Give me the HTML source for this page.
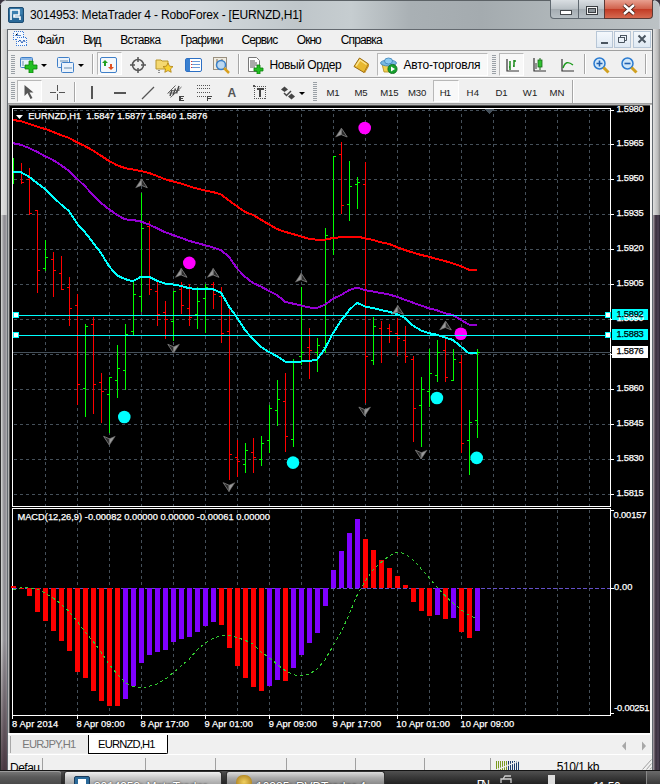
<!DOCTYPE html>
<html><head><meta charset="utf-8"><style>
html,body{margin:0;padding:0}
body{width:660px;height:784px;overflow:hidden;position:relative;background:#3a3440;font-family:"Liberation Sans",sans-serif;}
.a{position:absolute}
.t{position:absolute;white-space:nowrap;line-height:1}
.c{-webkit-text-stroke:0.25px currentColor}
</style></head><body>

<div class="a" style="left:0;top:0;width:660px;height:770px;background:#c9ced3;border-top-left-radius:7px;border-top-right-radius:7px;"></div>
<div class="a" style="left:0;top:215px;width:8px;height:555px;background:linear-gradient(to right,#303030 0px,#303030 1px,#d8d8d8 1px,#c0c0c0 2px,#8e8c92 4px,#9a989e 6px,#b8b8b8 7px);"></div>
<div class="a" style="left:0;top:29px;width:8px;height:186px;background:linear-gradient(to right,#404040 0px,#404040 1px,#e8e8e8 1px,#dadada 3px,#d0d0d0 6px,#c8c8c8 7px);"></div>
<div class="a" style="left:1px;top:640px;width:6px;height:130px;background:linear-gradient(to bottom,rgba(60,40,50,0),rgba(60,40,50,0.85));"></div>
<div class="a" style="left:652px;top:29px;width:8px;height:186px;background:linear-gradient(to right,#5a5a5a 0px,#5a5a5a 1px,#e0e0e0 1px,#cfcfcf 3px,#b8b8b8 6px,#8a8a8a 8px);"></div>
<div class="a" style="left:652px;top:215px;width:8px;height:555px;background:linear-gradient(to right,#3a3a3a 0px,#3a3a3a 1px,#a8a0a8 1px,#8a808a 2px,#4a3e4a 3px,#3a3040 5px,#54485a 6px,#3a3040 7px,#2a2430 8px);"></div>
<div class="a" style="left:0;top:5px;width:1px;height:765px;background:#2a2a2a"></div>
<div class="a" style="left:1px;top:1px;width:658px;height:28px;border-top-left-radius:6px;border-top-right-radius:6px;background:linear-gradient(to right,#dce1e5 0px,#d3d9dd 200px,#bfc6ca 300px,#c6cdd0 350px,#a9b0b4 410px,#a4abaf 480px,#b0b7ba 560px,#bcc2c5 660px);"></div>
<div class="a" style="left:6px;top:0;width:648px;height:1px;background:#5c6266"></div>
<svg class="a" style="left:8px;top:7px" width="16" height="16" viewBox="0 0 16 16">
<rect x="0.5" y="0.5" width="15" height="15" rx="1.5" fill="#2a6a9a" stroke="#1d4d73"/>
<rect x="1.5" y="1.5" width="13" height="6" fill="#4a8fc0" opacity="0.6"/>
<path d="M3 13V3h8v5H6v2h6v3" fill="none" stroke="#ffffff" stroke-width="1.6"/>
</svg>
<div class="t" style="left:30px;top:8.84px;font-size:12px;color:#000;letter-spacing:-0.196px;">3014953: MetaTrader 4 - RoboForex - [EURNZD,H1]</div>
<div class="a" style="left:550px;top:0;width:29px;height:19px;border:1px solid #5f6870;border-top:none;border-bottom-left-radius:4px;box-sizing:border-box;background:linear-gradient(#d9dee2,#b9c0c5 50%,#a4acb2 51%,#b8c0c5)"></div>
<div class="a" style="left:578px;top:0;width:27px;height:19px;border:1px solid #5f6870;border-top:none;box-sizing:border-box;background:linear-gradient(#d9dee2,#b9c0c5 50%,#a4acb2 51%,#b8c0c5)"></div>
<div class="a" style="left:604px;top:0;width:49px;height:19px;border:1px solid #5a3a36;border-top:none;border-bottom-right-radius:4px;box-sizing:border-box;background:linear-gradient(#e8a090,#d0604a 50%,#c23a24 51%,#d66a50)"></div>
<div class="a" style="left:560px;top:10px;width:10px;height:3px;background:#fff;border:1px solid #44484c"></div>
<div class="a" style="left:586px;top:6px;width:12px;height:9px;border:1px solid #3a3e42;background:#f4f4f4;box-sizing:border-box"></div>
<div class="a" style="left:588px;top:8px;width:8px;height:5px;border:1px solid #3a3e42;background:#8a9298;box-sizing:border-box"></div>

<svg class="a" style="left:621px;top:3px" width="16" height="13" viewBox="0 0 16 13"><path d="M3 2L13 11M13 2L3 11" stroke="#3a1a14" stroke-width="4.2"/><path d="M3 2L13 11M13 2L3 11" stroke="#ffffff" stroke-width="2.4"/></svg>
<div class="a" style="left:7px;top:29px;width:646px;height:741px;background:#f0f0f0;border:1px solid #646a70;box-sizing:border-box"></div>
<div class="a" style="left:8px;top:30px;width:644px;height:20px;background:#f0f0f0"></div>
<div class="a" style="left:8px;top:50px;width:644px;height:1px;background:#a0a0a0"></div>
<svg class="a" style="left:13px;top:31px" width="15" height="16" viewBox="0 0 15 16" shape-rendering="crispEdges">
<rect x="0.5" y="0.5" width="10" height="8" fill="#f4f8fc" stroke="#3a7ad8" stroke-dasharray="1 1"/>
<rect x="3.5" y="6.5" width="10" height="8" fill="#f4f8fc" stroke="#3a7ad8" stroke-dasharray="1 1"/>
<path d="M2 4h2v-2M5 4h3" stroke="#5a8ad0"/>
<path d="M5 11l2-2 2 3 2-3 1 2" fill="none" stroke="#2a60b8" shape-rendering="auto"/>
</svg>
<div class="t" style="left:37px;top:34.04px;font-size:12px;color:#000;letter-spacing:-0.667px;">Файл</div>
<div class="t" style="left:83.3px;top:34.04px;font-size:12px;color:#000;letter-spacing:-1.755px;">Вид</div>
<div class="t" style="left:120.2px;top:34.04px;font-size:12px;color:#000;letter-spacing:-0.600px;">Вставка</div>
<div class="t" style="left:180.5px;top:34.04px;font-size:12px;color:#000;letter-spacing:-0.783px;">Графики</div>
<div class="t" style="left:241.4px;top:34.04px;font-size:12px;color:#000;letter-spacing:-0.859px;">Сервис</div>
<div class="t" style="left:296.8px;top:34.04px;font-size:12px;color:#000;letter-spacing:-0.962px;">Окно</div>
<div class="t" style="left:340.7px;top:34.04px;font-size:12px;color:#000;letter-spacing:-0.846px;">Справка</div>
<div class="a" style="left:596px;top:31px;width:17px;height:17px;box-sizing:border-box;border:1px solid #b7c6d6;background:linear-gradient(#f4f8fc,#dfe9f3)"></div>
<div class="a" style="left:614px;top:31px;width:17px;height:17px;box-sizing:border-box;border:1px solid #b7c6d6;background:linear-gradient(#f4f8fc,#dfe9f3)"></div>
<div class="a" style="left:633px;top:31px;width:18px;height:17px;box-sizing:border-box;border:1px solid #b7c6d6;background:linear-gradient(#f4f8fc,#dfe9f3)"></div>
<div class="a" style="left:601px;top:42px;width:7px;height:2px;background:#4a5560"></div>
<svg class="a" style="left:617px;top:34px" width="11" height="10"><path d="M3.5 1.5h6v5h-2M1.5 3.5h6v5h-6z M3.5 1.5v2" fill="none" stroke="#4a5560" stroke-width="1"/><path d="M3 1h7v1h-7zM1 3h7v1h-7z" fill="#4a5560"/></svg>
<svg class="a" style="left:637px;top:34px" width="10" height="10"><path d="M1.5 1.5l7 7M8.5 1.5l-7 7" stroke="#4a5560" stroke-width="2"/></svg>
<div class="a" style="left:8px;top:51px;width:644px;height:27px;background:#f0f0f0"></div>
<div class="a" style="left:8px;top:77px;width:644px;height:1px;background:#a0a0a0"></div>
<div class="a" style="left:8px;top:78px;width:644px;height:1px;background:#ffffff"></div>
<div class="a" style="left:8px;top:79px;width:644px;height:25px;background:#f0f0f0"></div>
<div class="a" style="left:8px;top:103px;width:644px;height:1px;background:#a0a0a0"></div>
<div class="a" style="left:11px;top:55px;width:4px;height:1px;background:#9aa0a6"></div><div class="a" style="left:11px;top:57px;width:4px;height:1px;background:#9aa0a6"></div><div class="a" style="left:11px;top:59px;width:4px;height:1px;background:#9aa0a6"></div><div class="a" style="left:11px;top:61px;width:4px;height:1px;background:#9aa0a6"></div><div class="a" style="left:11px;top:63px;width:4px;height:1px;background:#9aa0a6"></div><div class="a" style="left:11px;top:65px;width:4px;height:1px;background:#9aa0a6"></div><div class="a" style="left:11px;top:67px;width:4px;height:1px;background:#9aa0a6"></div><div class="a" style="left:11px;top:69px;width:4px;height:1px;background:#9aa0a6"></div><div class="a" style="left:11px;top:71px;width:4px;height:1px;background:#9aa0a6"></div><div class="a" style="left:11px;top:73px;width:4px;height:1px;background:#9aa0a6"></div>
<svg class="a" style="left:19px;top:56px" width="19" height="17" viewBox="0 0 19 17">
<rect x="1.5" y="1.5" width="12" height="10" rx="1" fill="#eaf2fb" stroke="#3f7fc8"/>
<rect x="2" y="2" width="11" height="2" fill="#8cb8e8"/>
<path d="M4 5v5" stroke="#6a8fb0"/>
<path d="M10 5h4v4h4v4h-4v4h-4v-4h-4v-4h4z" fill="#22c022" stroke="#0a800a" stroke-width="0.8"/>
</svg>
<div class="a" style="left:41px;top:64px;width:0;height:0;border-left:3px solid transparent;border-right:3px solid transparent;border-top:3px solid #000"></div>
<svg class="a" style="left:56px;top:56px" width="19" height="18" viewBox="0 0 19 18">
<rect x="1.5" y="1.5" width="12" height="10" rx="1" fill="#eaf2fb" stroke="#3f7fc8"/>
<rect x="5.5" y="6.5" width="12" height="10" rx="1" fill="#eaf2fb" stroke="#3f7fc8"/>
<path d="M4 5h8M8 12h8" stroke="#6a8fb0"/>
</svg>
<div class="a" style="left:78px;top:64px;width:0;height:0;border-left:3px solid transparent;border-right:3px solid transparent;border-top:3px solid #000"></div>
<div class="a" style="left:92px;top:54px;width:1px;height:20px;background:#a6a6a6"></div><div class="a" style="left:93px;top:54px;width:1px;height:20px;background:#fff"></div>
<div class="a" style="left:97px;top:52px;width:25px;height:23px;box-sizing:border-box;border:1px solid #b8b8b8;border-right-color:#fff;border-bottom-color:#fff;background:#f8f8f8"></div>
<svg class="a" style="left:100px;top:57px" width="17" height="16" viewBox="0 0 17 16">
<rect x="0.5" y="0.5" width="16" height="15" rx="1.5" fill="#f4f8fc" stroke="#3f7fc8"/>
<path d="M5 3l3 3h-2v3h-2v-3h-2z" fill="#20a020"/>
<path d="M11 13l3-3h-2v-3h-2v3h-2z" fill="#e05020"/>
</svg>
<svg class="a" style="left:130px;top:57px" width="16" height="16" viewBox="0 0 16 16">
<circle cx="8" cy="8" r="5.5" fill="none" stroke="#555" stroke-width="1.5"/>
<path d="M8 0v5M8 11v5M0 8h5M11 8h5" stroke="#555" stroke-width="1.5"/>
</svg>
<svg class="a" style="left:155px;top:57px" width="19" height="17" viewBox="0 0 19 17">
<path d="M1 3h5l1 1h6v8h-12z" fill="#f4d870" stroke="#b8962a"/>
<path d="M13 6l1.6 3.2 3.4.4-2.5 2.3.7 3.4-3.2-1.7-3.2 1.7.7-3.4-2.5-2.3 3.4-.4z" fill="#f6d030" stroke="#b08010" stroke-width="0.8"/>
<path d="M4 13v3" stroke="#333" stroke-dasharray="1 1"/>
</svg>
<svg class="a" style="left:185px;top:58px" width="17" height="14" viewBox="0 0 17 14">
<rect x="0.5" y="0.5" width="16" height="13" rx="1.5" fill="#fff" stroke="#2c6fc4"/>
<rect x="1" y="1" width="4" height="12" fill="#3a80d0"/>
<path d="M7 3.5h8M7 6.5h8M7 9.5h8" stroke="#6a9ad8"/>
<path d="M6 3.5h1M6 6.5h1M6 9.5h1" stroke="#e03030"/>
</svg>
<svg class="a" style="left:213px;top:57px" width="19" height="18" viewBox="0 0 19 18">
<rect x="0.5" y="0.5" width="13" height="12" fill="#f0ece0" stroke="#9a9080"/>
<path d="M4 2v8M9 2v8" stroke="#806a50"/>
<circle cx="8" cy="8" r="4.5" fill="#bcd8f0" stroke="#3a80c8" stroke-width="1.5"/>
<path d="M11 11l5 5" stroke="#d8a020" stroke-width="2.5"/>
</svg>
<div class="a" style="left:238px;top:54px;width:1px;height:20px;background:#a6a6a6"></div><div class="a" style="left:239px;top:54px;width:1px;height:20px;background:#fff"></div>
<svg class="a" style="left:247px;top:57px" width="18" height="17" viewBox="0 0 18 17">
<path d="M1.5 0.5h8l3 3v11h-11z" fill="#fff" stroke="#777"/>
<path d="M3 4h5M3 6h7M3 8h7M3 10h5" stroke="#555"/>
<path d="M10 8h3v3h3v3h-3v3h-3v-3h-3v-3h3z" fill="#22c022" stroke="#0a800a" stroke-width="0.8"/>
</svg>
<div class="t" style="left:269.6px;top:58.84px;font-size:12px;color:#000;letter-spacing:-0.446px;">Новый Ордер</div>
<div class="a" style="left:377px;top:53px;width:111px;height:23px;box-sizing:border-box;border:1px solid #b8b8b8;border-right-color:#fff;border-bottom-color:#fff;background:#f8f8f8"></div>
<svg class="a" style="left:353px;top:57px" width="17" height="17" viewBox="0 0 17 17">
<path d="M1 9.5L6.5 1 15.5 7 11 15.5z" fill="#e8b830" stroke="#9a6a10" stroke-width="1"/>
<path d="M3 9L7 3 13.5 7.5" fill="none" stroke="#fbe38a" stroke-width="1.5"/>
<path d="M11 15.5L15.5 7 16 9 12 16z" fill="#c89020"/>
</svg>
<svg class="a" style="left:380px;top:57px" width="18" height="17" viewBox="0 0 18 17">
<path d="M2 7h13l-2 8h-9z" fill="#f2d050" stroke="#b08a20" stroke-width="0.8"/>
<ellipse cx="8.5" cy="6" rx="8" ry="3" fill="#78b8e0" stroke="#3a80b8" stroke-width="0.8"/>
<ellipse cx="8.5" cy="4" rx="4" ry="3" fill="#8ccaf0" stroke="#3a80b8" stroke-width="0.8"/>
<circle cx="12.5" cy="12" r="4.6" fill="#18a030" stroke="#0a6a18" stroke-width="0.8"/>
<path d="M11 9.5v5l4-2.5z" fill="#fff"/>
</svg>
<div class="t" style="left:403.5px;top:58.84px;font-size:12px;color:#000;letter-spacing:-0.187px;">Авто-торговля</div>
<div class="a" style="left:492px;top:55px;width:4px;height:1px;background:#9aa0a6"></div><div class="a" style="left:492px;top:57px;width:4px;height:1px;background:#9aa0a6"></div><div class="a" style="left:492px;top:59px;width:4px;height:1px;background:#9aa0a6"></div><div class="a" style="left:492px;top:61px;width:4px;height:1px;background:#9aa0a6"></div><div class="a" style="left:492px;top:63px;width:4px;height:1px;background:#9aa0a6"></div><div class="a" style="left:492px;top:65px;width:4px;height:1px;background:#9aa0a6"></div><div class="a" style="left:492px;top:67px;width:4px;height:1px;background:#9aa0a6"></div><div class="a" style="left:492px;top:69px;width:4px;height:1px;background:#9aa0a6"></div><div class="a" style="left:492px;top:71px;width:4px;height:1px;background:#9aa0a6"></div><div class="a" style="left:492px;top:73px;width:4px;height:1px;background:#9aa0a6"></div>
<div class="a" style="left:499px;top:53px;width:25px;height:23px;box-sizing:border-box;border:1px solid #b8b8b8;border-right-color:#fff;border-bottom-color:#fff;background:#f8f8f8"></div>
<svg class="a" style="left:505px;top:58px" width="15" height="15" viewBox="0 0 15 15">
<path d="M2 1v12h12" fill="none" stroke="#333" stroke-width="1.2"/>
<path d="M5 3v9M4 9h1M9 2v7M9 3h2M9 8h-1" stroke="#1a8a1a" stroke-width="1.5"/>
</svg>
<svg class="a" style="left:532px;top:57px" width="15" height="16" viewBox="0 0 15 16">
<path d="M2 1v13h12" fill="none" stroke="#333" stroke-width="1.2"/>
<path d="M8 1v12" stroke="#1a6a1a"/>
<rect x="6" y="3" width="4" height="7" fill="#30c030" stroke="#1a6a1a" stroke-width="0.8"/>
<path d="M4 6v6" stroke="#333"/>
</svg>
<svg class="a" style="left:560px;top:58px" width="15" height="15" viewBox="0 0 15 15">
<path d="M2 1v12h12" fill="none" stroke="#333" stroke-width="1.2"/>
<path d="M3 10c2-6 5-7 10-3" fill="none" stroke="#1a9a1a" stroke-width="1.4"/>
</svg>
<div class="a" style="left:584px;top:54px;width:1px;height:20px;background:#a6a6a6"></div><div class="a" style="left:585px;top:54px;width:1px;height:20px;background:#fff"></div>
<svg class="a" style="left:593px;top:57px" width="17" height="17" viewBox="0 0 17 17">
<circle cx="6.5" cy="6.5" r="5.5" fill="#cfe6f8" stroke="#2a7ad0" stroke-width="1.5"/>
<path d="M3.5 6.5h6M6.5 3.5v6" stroke="#2060b0" stroke-width="1.6"/>
<path d="M10.5 10.5l5 5" stroke="#d0a020" stroke-width="3"/>
</svg>
<svg class="a" style="left:621px;top:57px" width="17" height="17" viewBox="0 0 17 17">
<circle cx="6.5" cy="6.5" r="5.5" fill="#cfe6f8" stroke="#2a7ad0" stroke-width="1.5"/>
<path d="M3.5 6.5h6" stroke="#2060b0" stroke-width="1.6"/>
<path d="M10.5 10.5l5 5" stroke="#d0a020" stroke-width="3"/>
</svg>
<div class="a" style="left:645px;top:54px;width:1px;height:20px;background:#a6a6a6"></div><div class="a" style="left:646px;top:54px;width:1px;height:20px;background:#fff"></div>
<div class="a" style="left:11px;top:82px;width:4px;height:1px;background:#9aa0a6"></div><div class="a" style="left:11px;top:84px;width:4px;height:1px;background:#9aa0a6"></div><div class="a" style="left:11px;top:86px;width:4px;height:1px;background:#9aa0a6"></div><div class="a" style="left:11px;top:88px;width:4px;height:1px;background:#9aa0a6"></div><div class="a" style="left:11px;top:90px;width:4px;height:1px;background:#9aa0a6"></div><div class="a" style="left:11px;top:92px;width:4px;height:1px;background:#9aa0a6"></div><div class="a" style="left:11px;top:94px;width:4px;height:1px;background:#9aa0a6"></div><div class="a" style="left:11px;top:96px;width:4px;height:1px;background:#9aa0a6"></div><div class="a" style="left:11px;top:98px;width:4px;height:1px;background:#9aa0a6"></div>
<div class="a" style="left:17px;top:80px;width:25px;height:22px;box-sizing:border-box;border:1px solid #b8b8b8;border-right-color:#fff;border-bottom-color:#fff;background:#f8f8f8"></div>
<svg class="a" style="left:23px;top:84px" width="11" height="16" viewBox="0 0 11 16"><path d="M1.5 1v11l3-3 3 6 2-1-3-5.5h4z" fill="#555"/></svg>
<div class="a" style="left:50px;top:92px;width:15px;height:1px;background:#555"></div><div class="a" style="left:57px;top:85px;width:1px;height:15px;background:#555"></div><div class="a" style="left:56px;top:91px;width:3px;height:3px;background:#f0f0f0"></div>
<div class="a" style="left:74px;top:82px;width:1px;height:20px;background:#a6a6a6"></div><div class="a" style="left:75px;top:82px;width:1px;height:20px;background:#fff"></div>
<div class="a" style="left:91px;top:86px;width:1.5px;height:13px;background:#555"></div>
<div class="a" style="left:114px;top:92px;width:12px;height:1.5px;background:#555"></div>
<svg class="a" style="left:141px;top:86px" width="14" height="14"><path d="M1 13L13 1" stroke="#555" stroke-width="1.3"/></svg>
<svg class="a" style="left:166px;top:84px" width="18" height="17" viewBox="0 0 18 17">
<path d="M1.5 9.5L9.5 1.5M4.5 13.5L15.5 3" stroke="#666" stroke-width="1"/>
<path d="M4 12L6 6M7 11L9.5 4.5M10.5 9L13 2" stroke="#444" stroke-width="1.4"/>
<path d="M2.5 9h9M4.5 6.5h9" stroke="#555" stroke-width="0.8"/>
<path d="M13.5 12.5h4M13.5 14.5h3.5M13.5 16.5h4M14 12v5" stroke="#444" stroke-width="1.2" shape-rendering="crispEdges"/>
</svg>
<svg class="a" style="left:196px;top:84px" width="16" height="17" viewBox="0 0 16 17" shape-rendering="crispEdges">
<path d="M1 1.5h13M1 4.5h13M1 8.5h13M1 12.5h9" stroke="#555" stroke-dasharray="1 1"/>
<path d="M11.5 12v5M11.5 12.5h4M11.5 14.5h3" stroke="#444" stroke-width="1.3"/>
</svg>
<div class="t" style="left:227.5px;top:86.84px;font-size:12px;color:#555;letter-spacing:0.000px;font-weight:bold;">A</div>
<svg class="a" style="left:253px;top:85px" width="14" height="15" viewBox="0 0 14 15" shape-rendering="crispEdges">
<rect x="1.5" y="1.5" width="11" height="12" fill="none" stroke="#555" stroke-dasharray="1 1"/>
<rect x="0" y="0" width="2" height="2" fill="#555"/>
<path d="M3.5 4h7M7 4v8" stroke="#444" stroke-width="2"/>
</svg>
<svg class="a" style="left:280px;top:86px" width="16" height="14" viewBox="0 0 16 14">
<path d="M1 3.5L4.5 0.5 8 3.5 4.5 6z" fill="#444"/>
<path d="M4 7l2.5 2.5L11 5" fill="none" stroke="#444" stroke-width="1.5"/>
<path d="M8 10.5L11.5 7.5 15 10.5 11.5 13.5z" fill="#444"/>
</svg>
<div class="a" style="left:299px;top:92px;width:0;height:0;border-left:3px solid transparent;border-right:3px solid transparent;border-top:3px solid #000"></div>
<div class="a" style="left:313px;top:82px;width:4px;height:1px;background:#9aa0a6"></div><div class="a" style="left:313px;top:84px;width:4px;height:1px;background:#9aa0a6"></div><div class="a" style="left:313px;top:86px;width:4px;height:1px;background:#9aa0a6"></div><div class="a" style="left:313px;top:88px;width:4px;height:1px;background:#9aa0a6"></div><div class="a" style="left:313px;top:90px;width:4px;height:1px;background:#9aa0a6"></div><div class="a" style="left:313px;top:92px;width:4px;height:1px;background:#9aa0a6"></div><div class="a" style="left:313px;top:94px;width:4px;height:1px;background:#9aa0a6"></div><div class="a" style="left:313px;top:96px;width:4px;height:1px;background:#9aa0a6"></div><div class="a" style="left:313px;top:98px;width:4px;height:1px;background:#9aa0a6"></div><div class="a" style="left:313px;top:100px;width:4px;height:1px;background:#9aa0a6"></div>
<div class="a" style="left:433px;top:80px;width:26px;height:22px;box-sizing:border-box;border:1px solid #b8b8b8;border-right-color:#fff;border-bottom-color:#fff;background:#f8f8f8"></div>
<div class="t" style="left:326.5px;top:87.87px;font-size:9.6px;color:#222;letter-spacing:-0.336px;">M1</div>
<div class="t" style="left:354.4px;top:87.87px;font-size:9.6px;color:#222;letter-spacing:-0.036px;">M5</div>
<div class="t" style="left:380.3px;top:87.87px;font-size:9.6px;color:#222;letter-spacing:-0.238px;">M15</div>
<div class="t" style="left:408px;top:87.87px;font-size:9.6px;color:#222;letter-spacing:-0.138px;">M30</div>
<div class="t" style="left:439.7px;top:87.87px;font-size:9.6px;color:#222;letter-spacing:-0.972px;">H1</div>
<div class="t" style="left:466.5px;top:87.87px;font-size:9.6px;color:#222;letter-spacing:0.228px;">H4</div>
<div class="t" style="left:495.6px;top:87.87px;font-size:9.6px;color:#222;letter-spacing:-0.172px;">D1</div>
<div class="t" style="left:522.7px;top:87.87px;font-size:9.6px;color:#222;letter-spacing:0.200px;">W1</div>
<div class="t" style="left:549.4px;top:87.87px;font-size:9.6px;color:#222;letter-spacing:0.070px;">MN</div>
<div class="a" style="left:572px;top:80px;width:1px;height:23px;background:#a6a6a6"></div><div class="a" style="left:573px;top:80px;width:1px;height:23px;background:#fff"></div>
<div class="a" style="left:8px;top:104px;width:644px;height:631px;background:#000;box-sizing:border-box;border-top:1px solid #b4b4b4;border-left:1px solid #b4b4b4"></div>
<div class="a" style="left:9px;top:105px;width:643px;height:1px;background:#505050"></div>
<div class="a" style="left:9px;top:105px;width:1px;height:628px;background:#505050"></div>
<div class="a" style="left:8px;top:733px;width:644px;height:2px;background:#ffffff"></div>
<div class="a" style="left:650px;top:105px;width:2px;height:630px;background:#f4f4f4"></div>
<svg class="a" style="left:0;top:0" width="660" height="784" viewBox="0 0 660 784" shape-rendering="crispEdges">
<line x1="45.5" y1="108" x2="45.5" y2="506" stroke="#45505a" stroke-dasharray="3 3"/>
<line x1="77.5" y1="108" x2="77.5" y2="506" stroke="#45505a" stroke-dasharray="3 3"/>
<line x1="109.5" y1="108" x2="109.5" y2="506" stroke="#45505a" stroke-dasharray="3 3"/>
<line x1="141.5" y1="108" x2="141.5" y2="506" stroke="#45505a" stroke-dasharray="3 3"/>
<line x1="173.5" y1="108" x2="173.5" y2="506" stroke="#45505a" stroke-dasharray="3 3"/>
<line x1="205.5" y1="108" x2="205.5" y2="506" stroke="#45505a" stroke-dasharray="3 3"/>
<line x1="237.5" y1="108" x2="237.5" y2="506" stroke="#45505a" stroke-dasharray="3 3"/>
<line x1="269.5" y1="108" x2="269.5" y2="506" stroke="#45505a" stroke-dasharray="3 3"/>
<line x1="301.5" y1="108" x2="301.5" y2="506" stroke="#45505a" stroke-dasharray="3 3"/>
<line x1="333.5" y1="108" x2="333.5" y2="506" stroke="#45505a" stroke-dasharray="3 3"/>
<line x1="365.5" y1="108" x2="365.5" y2="506" stroke="#45505a" stroke-dasharray="3 3"/>
<line x1="397.5" y1="108" x2="397.5" y2="506" stroke="#45505a" stroke-dasharray="3 3"/>
<line x1="429.5" y1="108" x2="429.5" y2="506" stroke="#45505a" stroke-dasharray="3 3"/>
<line x1="461.5" y1="108" x2="461.5" y2="506" stroke="#45505a" stroke-dasharray="3 3"/>
<line x1="493.5" y1="108" x2="493.5" y2="506" stroke="#45505a" stroke-dasharray="3 3"/>
<line x1="525.5" y1="108" x2="525.5" y2="506" stroke="#45505a" stroke-dasharray="3 3"/>
<line x1="557.5" y1="108" x2="557.5" y2="506" stroke="#45505a" stroke-dasharray="3 3"/>
<line x1="589.5" y1="108" x2="589.5" y2="506" stroke="#45505a" stroke-dasharray="3 3"/>
<line x1="14" y1="110.5" x2="610" y2="110.5" stroke="#45505a" stroke-dasharray="3 3"/>
<line x1="14" y1="144.5" x2="610" y2="144.5" stroke="#45505a" stroke-dasharray="3 3"/>
<line x1="14" y1="179.5" x2="610" y2="179.5" stroke="#45505a" stroke-dasharray="3 3"/>
<line x1="14" y1="214.5" x2="610" y2="214.5" stroke="#45505a" stroke-dasharray="3 3"/>
<line x1="14" y1="249.5" x2="610" y2="249.5" stroke="#45505a" stroke-dasharray="3 3"/>
<line x1="14" y1="284.5" x2="610" y2="284.5" stroke="#45505a" stroke-dasharray="3 3"/>
<line x1="14" y1="319.5" x2="610" y2="319.5" stroke="#45505a" stroke-dasharray="3 3"/>
<line x1="14" y1="354.5" x2="610" y2="354.5" stroke="#45505a" stroke-dasharray="3 3"/>
<line x1="14" y1="389.5" x2="610" y2="389.5" stroke="#45505a" stroke-dasharray="3 3"/>
<line x1="14" y1="424.5" x2="610" y2="424.5" stroke="#45505a" stroke-dasharray="3 3"/>
<line x1="14" y1="459.5" x2="610" y2="459.5" stroke="#45505a" stroke-dasharray="3 3"/>
<line x1="14" y1="494.5" x2="610" y2="494.5" stroke="#45505a" stroke-dasharray="3 3"/>
<line x1="45.5" y1="510" x2="45.5" y2="715" stroke="#45505a" stroke-dasharray="3 3"/>
<line x1="77.5" y1="510" x2="77.5" y2="715" stroke="#45505a" stroke-dasharray="3 3"/>
<line x1="109.5" y1="510" x2="109.5" y2="715" stroke="#45505a" stroke-dasharray="3 3"/>
<line x1="141.5" y1="510" x2="141.5" y2="715" stroke="#45505a" stroke-dasharray="3 3"/>
<line x1="173.5" y1="510" x2="173.5" y2="715" stroke="#45505a" stroke-dasharray="3 3"/>
<line x1="205.5" y1="510" x2="205.5" y2="715" stroke="#45505a" stroke-dasharray="3 3"/>
<line x1="237.5" y1="510" x2="237.5" y2="715" stroke="#45505a" stroke-dasharray="3 3"/>
<line x1="269.5" y1="510" x2="269.5" y2="715" stroke="#45505a" stroke-dasharray="3 3"/>
<line x1="301.5" y1="510" x2="301.5" y2="715" stroke="#45505a" stroke-dasharray="3 3"/>
<line x1="333.5" y1="510" x2="333.5" y2="715" stroke="#45505a" stroke-dasharray="3 3"/>
<line x1="365.5" y1="510" x2="365.5" y2="715" stroke="#45505a" stroke-dasharray="3 3"/>
<line x1="397.5" y1="510" x2="397.5" y2="715" stroke="#45505a" stroke-dasharray="3 3"/>
<line x1="429.5" y1="510" x2="429.5" y2="715" stroke="#45505a" stroke-dasharray="3 3"/>
<line x1="461.5" y1="510" x2="461.5" y2="715" stroke="#45505a" stroke-dasharray="3 3"/>
<line x1="493.5" y1="510" x2="493.5" y2="715" stroke="#45505a" stroke-dasharray="3 3"/>
<line x1="525.5" y1="510" x2="525.5" y2="715" stroke="#45505a" stroke-dasharray="3 3"/>
<line x1="557.5" y1="510" x2="557.5" y2="715" stroke="#45505a" stroke-dasharray="3 3"/>
<line x1="589.5" y1="510" x2="589.5" y2="715" stroke="#45505a" stroke-dasharray="3 3"/>
<rect x="12.5" y="108.5" width="598" height="398" fill="none" stroke="#fff"/>
<rect x="12.5" y="508.5" width="598" height="207" fill="none" stroke="#fff"/>
<line x1="611" y1="110.5" x2="614" y2="110.5" stroke="#fff"/>
<line x1="611" y1="144.5" x2="614" y2="144.5" stroke="#fff"/>
<line x1="611" y1="179.5" x2="614" y2="179.5" stroke="#fff"/>
<line x1="611" y1="214.5" x2="614" y2="214.5" stroke="#fff"/>
<line x1="611" y1="249.5" x2="614" y2="249.5" stroke="#fff"/>
<line x1="611" y1="284.5" x2="614" y2="284.5" stroke="#fff"/>
<line x1="611" y1="319.5" x2="614" y2="319.5" stroke="#fff"/>
<line x1="611" y1="354.5" x2="614" y2="354.5" stroke="#fff"/>
<line x1="611" y1="389.5" x2="614" y2="389.5" stroke="#fff"/>
<line x1="611" y1="424.5" x2="614" y2="424.5" stroke="#fff"/>
<line x1="611" y1="459.5" x2="614" y2="459.5" stroke="#fff"/>
<line x1="611" y1="494.5" x2="614" y2="494.5" stroke="#fff"/>
<line x1="12.5" y1="716" x2="12.5" y2="719" stroke="#fff"/>
<line x1="77.5" y1="716" x2="77.5" y2="719" stroke="#fff"/>
<line x1="141.5" y1="716" x2="141.5" y2="719" stroke="#fff"/>
<line x1="205.5" y1="716" x2="205.5" y2="719" stroke="#fff"/>
<line x1="269.5" y1="716" x2="269.5" y2="719" stroke="#fff"/>
<line x1="333.5" y1="716" x2="333.5" y2="719" stroke="#fff"/>
<line x1="397.5" y1="716" x2="397.5" y2="719" stroke="#fff"/>
<line x1="461.5" y1="716" x2="461.5" y2="719" stroke="#fff"/>
<line x1="611" y1="510.5" x2="614" y2="510.5" stroke="#fff"/><line x1="611" y1="588.5" x2="614" y2="588.5" stroke="#fff"/><line x1="611" y1="713.5" x2="614" y2="713.5" stroke="#fff"/>
<line x1="13" y1="352.5" x2="611" y2="352.5" stroke="#45505a"/>
<rect x="13" y="158" width="1" height="26" fill="#00ff00"/>
<rect x="14" y="171" width="2" height="1" fill="#00ff00"/>
<rect x="21" y="163" width="1" height="21" fill="#ff0000"/>
<rect x="19" y="172" width="2" height="1" fill="#ff0000"/>
<rect x="22" y="182" width="2" height="1" fill="#ff0000"/>
<rect x="29" y="168" width="1" height="47" fill="#ff0000"/>
<rect x="27" y="179" width="2" height="1" fill="#ff0000"/>
<rect x="30" y="213" width="2" height="1" fill="#ff0000"/>
<rect x="37" y="210" width="1" height="83" fill="#ff0000"/>
<rect x="35" y="210" width="2" height="1" fill="#ff0000"/>
<rect x="38" y="270" width="2" height="1" fill="#ff0000"/>
<rect x="45" y="240" width="1" height="31" fill="#00ff00"/>
<rect x="43" y="268" width="2" height="1" fill="#00ff00"/>
<rect x="46" y="257" width="2" height="1" fill="#00ff00"/>
<rect x="53" y="252" width="1" height="45" fill="#ff0000"/>
<rect x="51" y="259" width="2" height="1" fill="#ff0000"/>
<rect x="54" y="270" width="2" height="1" fill="#ff0000"/>
<rect x="61" y="256" width="1" height="34" fill="#ff0000"/>
<rect x="59" y="273" width="2" height="1" fill="#ff0000"/>
<rect x="62" y="289" width="2" height="1" fill="#ff0000"/>
<rect x="69" y="277" width="1" height="49" fill="#ff0000"/>
<rect x="67" y="287" width="2" height="1" fill="#ff0000"/>
<rect x="70" y="308" width="2" height="1" fill="#ff0000"/>
<rect x="77" y="294" width="1" height="111" fill="#ff0000"/>
<rect x="75" y="305" width="2" height="1" fill="#ff0000"/>
<rect x="78" y="384" width="2" height="1" fill="#ff0000"/>
<rect x="85" y="324" width="1" height="93" fill="#00ff00"/>
<rect x="83" y="388" width="2" height="1" fill="#00ff00"/>
<rect x="86" y="326" width="2" height="1" fill="#00ff00"/>
<rect x="93" y="317" width="1" height="97" fill="#ff0000"/>
<rect x="91" y="324" width="2" height="1" fill="#ff0000"/>
<rect x="94" y="384" width="2" height="1" fill="#ff0000"/>
<rect x="101" y="373" width="1" height="50" fill="#ff0000"/>
<rect x="99" y="382" width="2" height="1" fill="#ff0000"/>
<rect x="102" y="391" width="2" height="1" fill="#ff0000"/>
<rect x="109" y="377" width="1" height="56" fill="#00ff00"/>
<rect x="107" y="394" width="2" height="1" fill="#00ff00"/>
<rect x="110" y="377" width="2" height="1" fill="#00ff00"/>
<rect x="117" y="345" width="1" height="53" fill="#00ff00"/>
<rect x="115" y="380" width="2" height="1" fill="#00ff00"/>
<rect x="118" y="368" width="2" height="1" fill="#00ff00"/>
<rect x="125" y="324" width="1" height="66" fill="#00ff00"/>
<rect x="123" y="370" width="2" height="1" fill="#00ff00"/>
<rect x="126" y="334" width="2" height="1" fill="#00ff00"/>
<rect x="133" y="281" width="1" height="55" fill="#00ff00"/>
<rect x="131" y="331" width="2" height="1" fill="#00ff00"/>
<rect x="134" y="294" width="2" height="1" fill="#00ff00"/>
<rect x="141" y="193" width="1" height="119" fill="#00ff00"/>
<rect x="139" y="296" width="2" height="1" fill="#00ff00"/>
<rect x="142" y="228" width="2" height="1" fill="#00ff00"/>
<rect x="149" y="221" width="1" height="74" fill="#ff0000"/>
<rect x="147" y="226" width="2" height="1" fill="#ff0000"/>
<rect x="150" y="289" width="2" height="1" fill="#ff0000"/>
<rect x="157" y="280" width="1" height="46" fill="#ff0000"/>
<rect x="155" y="291" width="2" height="1" fill="#ff0000"/>
<rect x="158" y="314" width="2" height="1" fill="#ff0000"/>
<rect x="165" y="301" width="1" height="38" fill="#ff0000"/>
<rect x="163" y="312" width="2" height="1" fill="#ff0000"/>
<rect x="166" y="319" width="2" height="1" fill="#ff0000"/>
<rect x="173" y="291" width="1" height="50" fill="#00ff00"/>
<rect x="171" y="321" width="2" height="1" fill="#00ff00"/>
<rect x="174" y="291" width="2" height="1" fill="#00ff00"/>
<rect x="181" y="282" width="1" height="32" fill="#ff0000"/>
<rect x="179" y="289" width="2" height="1" fill="#ff0000"/>
<rect x="182" y="305" width="2" height="1" fill="#ff0000"/>
<rect x="189" y="284" width="1" height="42" fill="#ff0000"/>
<rect x="187" y="308" width="2" height="1" fill="#ff0000"/>
<rect x="190" y="317" width="2" height="1" fill="#ff0000"/>
<rect x="197" y="287" width="1" height="42" fill="#00ff00"/>
<rect x="195" y="314" width="2" height="1" fill="#00ff00"/>
<rect x="198" y="301" width="2" height="1" fill="#00ff00"/>
<rect x="205" y="284" width="1" height="49" fill="#00ff00"/>
<rect x="203" y="298" width="2" height="1" fill="#00ff00"/>
<rect x="206" y="287" width="2" height="1" fill="#00ff00"/>
<rect x="213" y="282" width="1" height="27" fill="#ff0000"/>
<rect x="211" y="284" width="2" height="1" fill="#ff0000"/>
<rect x="214" y="294" width="2" height="1" fill="#ff0000"/>
<rect x="221" y="287" width="1" height="56" fill="#ff0000"/>
<rect x="219" y="296" width="2" height="1" fill="#ff0000"/>
<rect x="222" y="333" width="2" height="1" fill="#ff0000"/>
<rect x="229" y="307" width="1" height="173" fill="#ff0000"/>
<rect x="227" y="331" width="2" height="1" fill="#ff0000"/>
<rect x="230" y="454" width="2" height="1" fill="#ff0000"/>
<rect x="237" y="440" width="1" height="37" fill="#ff0000"/>
<rect x="235" y="457" width="2" height="1" fill="#ff0000"/>
<rect x="238" y="461" width="2" height="1" fill="#ff0000"/>
<rect x="245" y="443" width="1" height="30" fill="#00ff00"/>
<rect x="243" y="464" width="2" height="1" fill="#00ff00"/>
<rect x="246" y="450" width="2" height="1" fill="#00ff00"/>
<rect x="253" y="438" width="1" height="35" fill="#ff0000"/>
<rect x="251" y="452" width="2" height="1" fill="#ff0000"/>
<rect x="254" y="457" width="2" height="1" fill="#ff0000"/>
<rect x="261" y="436" width="1" height="30" fill="#00ff00"/>
<rect x="259" y="459" width="2" height="1" fill="#00ff00"/>
<rect x="262" y="443" width="2" height="1" fill="#00ff00"/>
<rect x="269" y="405" width="1" height="48" fill="#00ff00"/>
<rect x="267" y="440" width="2" height="1" fill="#00ff00"/>
<rect x="270" y="408" width="2" height="1" fill="#00ff00"/>
<rect x="277" y="380" width="1" height="46" fill="#00ff00"/>
<rect x="275" y="410" width="2" height="1" fill="#00ff00"/>
<rect x="278" y="399" width="2" height="1" fill="#00ff00"/>
<rect x="285" y="373" width="1" height="79" fill="#ff0000"/>
<rect x="283" y="401" width="2" height="1" fill="#ff0000"/>
<rect x="286" y="436" width="2" height="1" fill="#ff0000"/>
<rect x="293" y="359" width="1" height="88" fill="#00ff00"/>
<rect x="291" y="439" width="2" height="1" fill="#00ff00"/>
<rect x="294" y="361" width="2" height="1" fill="#00ff00"/>
<rect x="301" y="287" width="1" height="78" fill="#00ff00"/>
<rect x="299" y="356" width="2" height="1" fill="#00ff00"/>
<rect x="302" y="352" width="2" height="1" fill="#00ff00"/>
<rect x="309" y="328" width="1" height="51" fill="#ff0000"/>
<rect x="307" y="347" width="2" height="1" fill="#ff0000"/>
<rect x="310" y="350" width="2" height="1" fill="#ff0000"/>
<rect x="317" y="338" width="1" height="34" fill="#00ff00"/>
<rect x="315" y="352" width="2" height="1" fill="#00ff00"/>
<rect x="318" y="345" width="2" height="1" fill="#00ff00"/>
<rect x="325" y="228" width="1" height="125" fill="#00ff00"/>
<rect x="323" y="347" width="2" height="1" fill="#00ff00"/>
<rect x="326" y="235" width="2" height="1" fill="#00ff00"/>
<rect x="333" y="156" width="1" height="99" fill="#00ff00"/>
<rect x="331" y="238" width="2" height="1" fill="#00ff00"/>
<rect x="334" y="156" width="2" height="1" fill="#00ff00"/>
<rect x="341" y="142" width="1" height="72" fill="#ff0000"/>
<rect x="339" y="154" width="2" height="1" fill="#ff0000"/>
<rect x="342" y="205" width="2" height="1" fill="#ff0000"/>
<rect x="349" y="161" width="1" height="60" fill="#00ff00"/>
<rect x="347" y="204" width="2" height="1" fill="#00ff00"/>
<rect x="350" y="186" width="2" height="1" fill="#00ff00"/>
<rect x="357" y="177" width="1" height="32" fill="#00ff00"/>
<rect x="355" y="184" width="2" height="1" fill="#00ff00"/>
<rect x="358" y="182" width="2" height="1" fill="#00ff00"/>
<rect x="365" y="162" width="1" height="241" fill="#ff0000"/>
<rect x="363" y="184" width="2" height="1" fill="#ff0000"/>
<rect x="366" y="356" width="2" height="1" fill="#ff0000"/>
<rect x="373" y="317" width="1" height="48" fill="#00ff00"/>
<rect x="371" y="360" width="2" height="1" fill="#00ff00"/>
<rect x="374" y="326" width="2" height="1" fill="#00ff00"/>
<rect x="381" y="321" width="1" height="42" fill="#ff0000"/>
<rect x="379" y="328" width="2" height="1" fill="#ff0000"/>
<rect x="382" y="335" width="2" height="1" fill="#ff0000"/>
<rect x="389" y="324" width="1" height="19" fill="#ff0000"/>
<rect x="387" y="328" width="2" height="1" fill="#ff0000"/>
<rect x="390" y="331" width="2" height="1" fill="#ff0000"/>
<rect x="397" y="318" width="1" height="38" fill="#ff0000"/>
<rect x="395" y="333" width="2" height="1" fill="#ff0000"/>
<rect x="398" y="338" width="2" height="1" fill="#ff0000"/>
<rect x="405" y="326" width="1" height="37" fill="#ff0000"/>
<rect x="403" y="340" width="2" height="1" fill="#ff0000"/>
<rect x="406" y="356" width="2" height="1" fill="#ff0000"/>
<rect x="413" y="356" width="1" height="86" fill="#ff0000"/>
<rect x="411" y="359" width="2" height="1" fill="#ff0000"/>
<rect x="414" y="408" width="2" height="1" fill="#ff0000"/>
<rect x="421" y="377" width="1" height="70" fill="#00ff00"/>
<rect x="419" y="405" width="2" height="1" fill="#00ff00"/>
<rect x="422" y="389" width="2" height="1" fill="#00ff00"/>
<rect x="429" y="349" width="1" height="58" fill="#00ff00"/>
<rect x="427" y="391" width="2" height="1" fill="#00ff00"/>
<rect x="430" y="373" width="2" height="1" fill="#00ff00"/>
<rect x="437" y="340" width="1" height="42" fill="#00ff00"/>
<rect x="435" y="375" width="2" height="1" fill="#00ff00"/>
<rect x="438" y="352" width="2" height="1" fill="#00ff00"/>
<rect x="445" y="335" width="1" height="47" fill="#ff0000"/>
<rect x="443" y="350" width="2" height="1" fill="#ff0000"/>
<rect x="446" y="377" width="2" height="1" fill="#ff0000"/>
<rect x="453" y="349" width="1" height="32" fill="#00ff00"/>
<rect x="451" y="380" width="2" height="1" fill="#00ff00"/>
<rect x="454" y="359" width="2" height="1" fill="#00ff00"/>
<rect x="461" y="355" width="1" height="98" fill="#ff0000"/>
<rect x="459" y="362" width="2" height="1" fill="#ff0000"/>
<rect x="462" y="443" width="2" height="1" fill="#ff0000"/>
<rect x="469" y="410" width="1" height="65" fill="#00ff00"/>
<rect x="467" y="440" width="2" height="1" fill="#00ff00"/>
<rect x="470" y="422" width="2" height="1" fill="#00ff00"/>
<rect x="477" y="349" width="1" height="89" fill="#00ff00"/>
<rect x="475" y="420" width="2" height="1" fill="#00ff00"/>
<rect x="478" y="352" width="2" height="1" fill="#00ff00"/>
<polyline points="13,119.9 21,121.3 29,123.7 37,126.6 45,128.9 53,131.8 61,135.2 69,137.9 77,142.3 85,146.1 93,150.5 101,155.7 109,161.0 117,165.2 125,168.1 133,169.5 141,171.0 149,172.9 157,176.0 165,179.2 173,181.5 181,183.4 189,186.3 197,188.6 205,190.5 213,192.0 221,194.5 229,200.6 237,206.3 245,212.0 253,215.0 261,219.7 269,224.5 277,229.0 285,231.8 293,234.0 301,236.5 309,238.8 317,239.8 325,239.8 333,237.9 341,237.3 349,236.9 357,236.5 365,238.3 373,240.0 381,242.4 389,243.8 397,247.2 405,250.0 413,252.6 421,254.9 429,256.8 437,259.0 445,261.0 453,263.5 461,266.3 469,269.8 477,269.8" fill="none" stroke="#ff0000" stroke-width="2" shape-rendering="crispEdges" stroke-linejoin="round"/>
<polyline points="13,143.2 21,144.8 29,148.0 37,151.8 45,156.2 53,160.0 61,165.2 69,171.0 77,178.6 85,186.3 93,194.9 101,202.9 109,209.2 117,214.9 125,219.3 133,220.0 141,221.6 149,224.5 157,228.3 165,232.2 173,235.0 181,237.9 189,240.8 197,243.0 205,245.2 213,247.4 221,250.3 229,256.8 237,268.4 245,276.8 253,283.0 261,286.6 269,291.0 277,295.0 285,301.7 293,303.6 301,305.5 309,307.4 317,308.0 325,304.6 333,298.8 341,295.0 349,290.2 357,287.4 365,290.2 373,291.5 381,293.0 389,294.4 397,296.9 405,299.8 413,302.7 421,305.5 429,308.4 437,310.3 445,313.2 453,315.1 461,319.9 469,324.6 477,324.6" fill="none" stroke="#9400d3" stroke-width="2" shape-rendering="crispEdges" stroke-linejoin="round"/>
<polyline points="13,171.5 21,172.3 29,176.7 37,183.0 45,189.1 53,196.8 61,204.4 69,211.1 77,223.5 85,232.2 93,242.7 101,253.0 109,266.2 117,275.3 125,279.1 133,281.2 141,276.8 149,276.8 157,280.7 165,283.5 173,284.5 181,285.8 189,288.3 197,288.9 205,288.9 213,289.3 221,292.7 229,306.5 237,317.5 245,330.0 253,339.2 261,347.0 269,352.0 277,356.3 285,361.5 293,361.5 301,361.5 309,361.0 317,359.6 325,348.5 333,333.2 341,320.8 349,310.3 357,302.7 365,306.5 373,308.0 381,310.0 389,311.8 397,314.1 405,318.0 413,325.6 421,330.4 429,333.2 437,334.8 445,337.5 453,340.0 461,346.6 469,353.3 477,353.3" fill="none" stroke="#00ffff" stroke-width="2" shape-rendering="crispEdges" stroke-linejoin="round"/>
<path d="M141.5 178.9L147.3 187.7L141.5 185.4Z" fill="#2a2a2a" stroke="#7a7a7a" stroke-width="0.9" shape-rendering="auto"/>
<path d="M141.5 178.9L135.7 187.7L141.5 185.4Z" fill="#9a9a9a" stroke="#6a6a6a" stroke-width="0.6" shape-rendering="auto"/>
<path d="M181.2 268.5L187.0 277.3L181.2 275.0Z" fill="#2a2a2a" stroke="#7a7a7a" stroke-width="0.9" shape-rendering="auto"/>
<path d="M181.2 268.5L175.4 277.3L181.2 275.0Z" fill="#9a9a9a" stroke="#6a6a6a" stroke-width="0.6" shape-rendering="auto"/>
<path d="M213.2 268.5L219.0 277.3L213.2 275.0Z" fill="#2a2a2a" stroke="#7a7a7a" stroke-width="0.9" shape-rendering="auto"/>
<path d="M213.2 268.5L207.4 277.3L213.2 275.0Z" fill="#9a9a9a" stroke="#6a6a6a" stroke-width="0.6" shape-rendering="auto"/>
<path d="M341.4 128.2L347.2 137.0L341.4 134.7Z" fill="#2a2a2a" stroke="#7a7a7a" stroke-width="0.9" shape-rendering="auto"/>
<path d="M341.4 128.2L335.6 137.0L341.4 134.7Z" fill="#9a9a9a" stroke="#6a6a6a" stroke-width="0.6" shape-rendering="auto"/>
<path d="M301.2 273.3L307.0 282.1L301.2 279.8Z" fill="#2a2a2a" stroke="#7a7a7a" stroke-width="0.9" shape-rendering="auto"/>
<path d="M301.2 273.3L295.4 282.1L301.2 279.8Z" fill="#9a9a9a" stroke="#6a6a6a" stroke-width="0.6" shape-rendering="auto"/>
<path d="M397.7 305.5L403.5 314.3L397.7 312.0Z" fill="#2a2a2a" stroke="#7a7a7a" stroke-width="0.9" shape-rendering="auto"/>
<path d="M397.7 305.5L391.9 314.3L397.7 312.0Z" fill="#9a9a9a" stroke="#6a6a6a" stroke-width="0.6" shape-rendering="auto"/>
<path d="M445.5 321.1L451.3 329.9L445.5 327.6Z" fill="#2a2a2a" stroke="#7a7a7a" stroke-width="0.9" shape-rendering="auto"/>
<path d="M445.5 321.1L439.7 329.9L445.5 327.6Z" fill="#9a9a9a" stroke="#6a6a6a" stroke-width="0.6" shape-rendering="auto"/>
<path d="M109.4 445.1L103.6 436.3L109.4 438.8Z" fill="#2a2a2a" stroke="#7a7a7a" stroke-width="0.9" shape-rendering="auto"/>
<path d="M109.4 445.1L115.2 436.3L109.4 438.8Z" fill="#9a9a9a" stroke="#6a6a6a" stroke-width="0.6" shape-rendering="auto"/>
<path d="M173.6 353.1L167.8 344.3L173.6 346.8Z" fill="#2a2a2a" stroke="#7a7a7a" stroke-width="0.9" shape-rendering="auto"/>
<path d="M173.6 353.1L179.4 344.3L173.6 346.8Z" fill="#9a9a9a" stroke="#6a6a6a" stroke-width="0.6" shape-rendering="auto"/>
<path d="M229.0 491.5L223.2 482.7L229.0 485.2Z" fill="#2a2a2a" stroke="#7a7a7a" stroke-width="0.9" shape-rendering="auto"/>
<path d="M229.0 491.5L234.8 482.7L229.0 485.2Z" fill="#9a9a9a" stroke="#6a6a6a" stroke-width="0.6" shape-rendering="auto"/>
<path d="M364.7 415.9L358.9 407.1L364.7 409.6Z" fill="#2a2a2a" stroke="#7a7a7a" stroke-width="0.9" shape-rendering="auto"/>
<path d="M364.7 415.9L370.5 407.1L364.7 409.6Z" fill="#9a9a9a" stroke="#6a6a6a" stroke-width="0.6" shape-rendering="auto"/>
<path d="M421.2 459.0L415.4 450.2L421.2 452.7Z" fill="#2a2a2a" stroke="#7a7a7a" stroke-width="0.9" shape-rendering="auto"/>
<path d="M421.2 459.0L427.0 450.2L421.2 452.7Z" fill="#9a9a9a" stroke="#6a6a6a" stroke-width="0.6" shape-rendering="auto"/>
<circle cx="189.3" cy="262.9" r="6.3" fill="#ff00ff" shape-rendering="auto"/>
<circle cx="364.7" cy="128.0" r="6.3" fill="#ff00ff" shape-rendering="auto"/>
<circle cx="460.8" cy="333.8" r="6.3" fill="#ff00ff" shape-rendering="auto"/>
<circle cx="124.3" cy="417.0" r="6.3" fill="#00ffff" shape-rendering="auto"/>
<circle cx="293.0" cy="462.6" r="6.3" fill="#00ffff" shape-rendering="auto"/>
<circle cx="436.9" cy="398.0" r="6.3" fill="#00ffff" shape-rendering="auto"/>
<circle cx="476.7" cy="457.9" r="6.3" fill="#00ffff" shape-rendering="auto"/>
<line x1="13" y1="315.5" x2="611" y2="315.5" stroke="#00ffff"/>
<line x1="13" y1="335.5" x2="611" y2="335.5" stroke="#00ffff"/>
<rect x="13.5" y="312.5" width="5" height="5" fill="#fff" stroke="#00ffff"/>
<rect x="605.5" y="312.5" width="5" height="5" fill="#fff" stroke="#00ffff"/>
<rect x="13.5" y="332.5" width="5" height="5" fill="#fff" stroke="#00ffff"/>
<rect x="605.5" y="332.5" width="5" height="5" fill="#fff" stroke="#00ffff"/>
<rect x="612" y="309" width="36" height="11" fill="#00ffff"/>
<rect x="612" y="329" width="36" height="11" fill="#00ffff"/>
<rect x="612" y="346" width="36" height="12" fill="#fff"/>
<line x1="13" y1="588.5" x2="610" y2="588.5" stroke="#6450c8" stroke-dasharray="4 2"/>
<rect x="11" y="586" width="5" height="2" fill="#ff0000"/>
<rect x="19" y="588" width="5" height="1" fill="#ff0000"/>
<rect x="27" y="588" width="5" height="8" fill="#ff0000"/>
<rect x="35" y="588" width="5" height="24" fill="#ff0000"/>
<rect x="43" y="588" width="5" height="33" fill="#ff0000"/>
<rect x="51" y="588" width="5" height="43" fill="#ff0000"/>
<rect x="59" y="588" width="5" height="53" fill="#ff0000"/>
<rect x="67" y="588" width="5" height="63" fill="#ff0000"/>
<rect x="75" y="588" width="5" height="84" fill="#ff0000"/>
<rect x="83" y="588" width="5" height="90" fill="#ff0000"/>
<rect x="91" y="588" width="5" height="103" fill="#ff0000"/>
<rect x="99" y="588" width="5" height="113" fill="#ff0000"/>
<rect x="107" y="588" width="5" height="118" fill="#ff0000"/>
<rect x="115" y="588" width="5" height="118" fill="#ff0000"/>
<rect x="123" y="588" width="5" height="111" fill="#8000ff"/>
<rect x="131" y="588" width="5" height="98" fill="#8000ff"/>
<rect x="139" y="588" width="5" height="75" fill="#8000ff"/>
<rect x="147" y="588" width="5" height="67" fill="#8000ff"/>
<rect x="155" y="588" width="5" height="64" fill="#8000ff"/>
<rect x="163" y="588" width="5" height="62" fill="#8000ff"/>
<rect x="171" y="588" width="5" height="54" fill="#8000ff"/>
<rect x="179" y="588" width="5" height="51" fill="#8000ff"/>
<rect x="187" y="588" width="5" height="49" fill="#8000ff"/>
<rect x="195" y="588" width="5" height="44" fill="#8000ff"/>
<rect x="203" y="588" width="5" height="38" fill="#8000ff"/>
<rect x="211" y="588" width="5" height="34" fill="#8000ff"/>
<rect x="219" y="588" width="5" height="37" fill="#ff0000"/>
<rect x="227" y="588" width="5" height="60" fill="#ff0000"/>
<rect x="235" y="588" width="5" height="78" fill="#ff0000"/>
<rect x="243" y="588" width="5" height="90" fill="#ff0000"/>
<rect x="251" y="588" width="5" height="99" fill="#ff0000"/>
<rect x="259" y="588" width="5" height="103" fill="#ff0000"/>
<rect x="267" y="588" width="5" height="98" fill="#8000ff"/>
<rect x="275" y="588" width="5" height="92" fill="#8000ff"/>
<rect x="283" y="588" width="5" height="93" fill="#ff0000"/>
<rect x="291" y="588" width="5" height="80" fill="#8000ff"/>
<rect x="299" y="588" width="5" height="67" fill="#8000ff"/>
<rect x="307" y="588" width="5" height="55" fill="#8000ff"/>
<rect x="315" y="588" width="5" height="45" fill="#8000ff"/>
<rect x="323" y="588" width="5" height="18" fill="#8000ff"/>
<rect x="331" y="570" width="5" height="18" fill="#8000ff"/>
<rect x="339" y="551" width="5" height="37" fill="#8000ff"/>
<rect x="347" y="533" width="5" height="55" fill="#8000ff"/>
<rect x="355" y="519" width="5" height="69" fill="#8000ff"/>
<rect x="363" y="539" width="5" height="49" fill="#ff0000"/>
<rect x="371" y="550" width="5" height="38" fill="#ff0000"/>
<rect x="379" y="560" width="5" height="28" fill="#ff0000"/>
<rect x="387" y="568" width="5" height="20" fill="#ff0000"/>
<rect x="395" y="576" width="5" height="12" fill="#ff0000"/>
<rect x="403" y="585" width="5" height="3" fill="#ff0000"/>
<rect x="411" y="588" width="5" height="14" fill="#ff0000"/>
<rect x="419" y="588" width="5" height="23" fill="#ff0000"/>
<rect x="427" y="588" width="5" height="28" fill="#ff0000"/>
<rect x="435" y="588" width="5" height="27" fill="#8000ff"/>
<rect x="443" y="588" width="5" height="31" fill="#ff0000"/>
<rect x="451" y="588" width="5" height="30" fill="#8000ff"/>
<rect x="459" y="588" width="5" height="44" fill="#ff0000"/>
<rect x="467" y="588" width="5" height="50" fill="#ff0000"/>
<rect x="475" y="588" width="5" height="43" fill="#8000ff"/>
<polyline points="13,590.0 21,587.7 29,587.7 37,589.0 45,593.0 53,598.0 61,604.0 69,611.6 77,621.0 85,631.7 93,641.3 101,651.8 109,664.2 117,673.8 125,682.4 133,686.5 141,688.1 149,686.2 157,683.9 165,679.5 173,672.8 181,666.1 189,659.4 197,649.9 205,643.2 213,638.4 221,635.5 229,635.5 237,637.4 245,640.3 253,644.1 261,651.8 269,657.5 277,664.2 285,670.5 293,674.7 301,676.0 309,674.3 317,669.0 325,659.8 333,646.0 341,632.6 349,614.7 357,595.6 365,581.5 373,570.0 381,562.4 389,556.0 397,552.2 405,553.5 413,559.8 421,568.8 429,577.7 437,587.1 445,595.6 453,603.2 461,609.6 469,615.2 477,618.5" fill="none" stroke="#32cd32" stroke-width="1" stroke-dasharray="3 3" shape-rendering="crispEdges"/>
<path d="M485 109H494L489.5 114Z" fill="#45505a"/>
</svg>
<svg class="a" style="left:16px;top:115px" width="7" height="4"><path d="M0 0h7l-3.5 4z" fill="#fff"/></svg>
<div class="t c" style="left:28.2px;top:111.83px;font-size:9.3px;color:#fff;letter-spacing:-0.020px;">EURNZD,H1&nbsp;&nbsp;1.5847 1.5877 1.5840 1.5876</div>
<div class="t c" style="left:17.4px;top:512.73px;font-size:9.3px;color:#fff;letter-spacing:0.015px;">MACD(12,26,9) -0.00082 0.00000 0.00000 -0.00061 0.00000</div>
<div class="t c" style="left:616.4px;top:105.33px;font-size:9.3px;color:#fff;letter-spacing:-0.229px;">1.5980</div>
<div class="t c" style="left:616.4px;top:139.33px;font-size:9.3px;color:#fff;letter-spacing:-0.229px;">1.5965</div>
<div class="t c" style="left:616.4px;top:174.33px;font-size:9.3px;color:#fff;letter-spacing:-0.229px;">1.5950</div>
<div class="t c" style="left:616.4px;top:209.33px;font-size:9.3px;color:#fff;letter-spacing:-0.229px;">1.5935</div>
<div class="t c" style="left:616.4px;top:244.33px;font-size:9.3px;color:#fff;letter-spacing:-0.229px;">1.5920</div>
<div class="t c" style="left:616.4px;top:279.33px;font-size:9.3px;color:#fff;letter-spacing:-0.229px;">1.5905</div>
<div class="t c" style="left:616.4px;top:314.33px;font-size:9.3px;color:#fff;letter-spacing:-0.229px;">1.5890</div>
<div class="t c" style="left:616.4px;top:384.33px;font-size:9.3px;color:#fff;letter-spacing:-0.229px;">1.5860</div>
<div class="t c" style="left:616.4px;top:419.33px;font-size:9.3px;color:#fff;letter-spacing:-0.229px;">1.5845</div>
<div class="t c" style="left:616.4px;top:454.33px;font-size:9.3px;color:#fff;letter-spacing:-0.229px;">1.5830</div>
<div class="t c" style="left:616.4px;top:489.33px;font-size:9.3px;color:#fff;letter-spacing:-0.229px;">1.5815</div>
<div class="t c" style="left:616.5px;top:309.73px;font-size:9.3px;color:#000;letter-spacing:-0.229px;">1.5892</div>
<div class="t c" style="left:616.5px;top:329.73px;font-size:9.3px;color:#000;letter-spacing:-0.229px;">1.5883</div>
<div class="t c" style="left:616.5px;top:347.13px;font-size:9.3px;color:#000;letter-spacing:-0.229px;">1.5876</div>
<div class="t c" style="left:613.6px;top:511.43px;font-size:9.3px;color:#fff;letter-spacing:-0.136px;">0.00157</div>
<div class="t c" style="left:614px;top:583.43px;font-size:9.3px;color:#fff;letter-spacing:0.133px;">0.00</div>
<div class="t c" style="left:614.2px;top:704.33px;font-size:9.3px;color:#fff;letter-spacing:-0.202px;">-0.00251</div>
<div class="t c" style="left:12px;top:719.63px;font-size:9.3px;color:#fff;letter-spacing:0.135px;">8 Apr 2014</div>
<div class="t c" style="left:76.4px;top:719.63px;font-size:9.3px;color:#fff;letter-spacing:0.073px;">8 Apr 09:00</div>
<div class="t c" style="left:140.5px;top:719.63px;font-size:9.3px;color:#fff;letter-spacing:0.093px;">8 Apr 17:00</div>
<div class="t c" style="left:204.5px;top:719.63px;font-size:9.3px;color:#fff;letter-spacing:0.093px;">9 Apr 01:00</div>
<div class="t c" style="left:268.75px;top:719.63px;font-size:9.3px;color:#fff;letter-spacing:0.073px;">9 Apr 09:00</div>
<div class="t c" style="left:332.5px;top:719.63px;font-size:9.3px;color:#fff;letter-spacing:0.113px;">9 Apr 17:00</div>
<div class="t c" style="left:396.25px;top:719.63px;font-size:9.3px;color:#fff;letter-spacing:0.087px;">10 Apr 01:00</div>
<div class="t c" style="left:460.4px;top:719.63px;font-size:9.3px;color:#fff;letter-spacing:0.087px;">10 Apr 09:00</div>
<div class="a" style="left:8px;top:735px;width:644px;height:20px;background:#f0f0f0"></div>
<div class="a" style="left:8px;top:735px;width:80px;height:18px;background:#ebebeb"></div>
<div class="a" style="left:10px;top:736px;width:1px;height:17px;background:#a8a8a8"></div>
<div class="t" style="left:22.3px;top:738.92px;font-size:11.2px;color:#7a7a7a;letter-spacing:-0.772px;">EURJPY,H1</div>
<div class="a" style="left:88px;top:735px;width:80px;height:19px;background:#fff;border:1px solid #000;border-top:none;border-bottom-right-radius:2px;box-sizing:border-box"></div>
<div class="t" style="left:98px;top:738.92px;font-size:11.2px;color:#000;letter-spacing:-0.824px;">EURNZD,H1</div>
<svg class="a" style="left:615px;top:740px" width="36" height="12"><path d="M11 1.5l-4 4.5 4 4.5z M27 1.5l4 4.5-4 4.5z" fill="#a8a8a8"/></svg>
<div class="a" style="left:8px;top:754px;width:644px;height:16px;background:#f0f0f0;border-top:1px solid #ffffff;box-sizing:border-box"></div>
<div class="a" style="left:42px;top:758px;width:1px;height:12px;background:#a0a0a0"></div>
<div class="a" style="left:145px;top:758px;width:1px;height:12px;background:#a0a0a0"></div>
<div class="a" style="left:215px;top:758px;width:1px;height:12px;background:#a0a0a0"></div>
<div class="a" style="left:286px;top:758px;width:1px;height:12px;background:#a0a0a0"></div>
<div class="a" style="left:355px;top:758px;width:1px;height:12px;background:#a0a0a0"></div>
<div class="a" style="left:424px;top:758px;width:1px;height:12px;background:#a0a0a0"></div>
<div class="a" style="left:490px;top:758px;width:1px;height:12px;background:#a0a0a0"></div>
<div class="t" style="left:10px;top:761.84px;font-size:12px;color:#000;letter-spacing:-0.506px;">Defau</div>
<div class="t" style="left:556.8px;top:761.34px;font-size:12px;color:#000;letter-spacing:-0.505px;">510/1 kb</div>
<svg class="a" style="left:496px;top:761px" width="24" height="9" shape-rendering="crispEdges"><rect x="0" y="0" width="1" height="9" fill="#7a9a20"/><rect x="2" y="0" width="1" height="9" fill="#7a9a20"/><rect x="4" y="0" width="1" height="9" fill="#7a9a20"/><rect x="6" y="0" width="1" height="9" fill="#7a9a20"/><rect x="8" y="0" width="1" height="9" fill="#7a9a20"/><rect x="10" y="0" width="1" height="9" fill="#7a9a20"/><rect x="12" y="0" width="1" height="9" fill="#1a3a6a"/><rect x="14" y="0" width="1" height="9" fill="#1a3a6a"/><rect x="16" y="0" width="1" height="9" fill="#1a3a6a"/><rect x="18" y="0" width="1" height="9" fill="#1a3a6a"/><rect x="20" y="0" width="1" height="9" fill="#1a3a6a"/><rect x="22" y="0" width="1" height="9" fill="#1a3a6a"/><path d="M0 9L23 0" stroke="#f0f0f0" stroke-width="1.2" shape-rendering="auto"/></svg>
<svg class="a" style="left:641px;top:757px" width="11" height="13"><path d="M10.5 2.5L1.5 12.5M10.5 6.5L5.5 12.5M10.5 10.5L9 12.5" stroke="#a0a0a0"/></svg>
<div class="a" style="left:0;top:770px;width:660px;height:14px;background:linear-gradient(#141414 0px,#141414 1px,#505050 1px,#3a3a3a 6px,#262626 14px)"></div>
<div class="a" style="left:0;top:771px;width:61px;height:13px;border-top-right-radius:3px;background:linear-gradient(#7a7a7a,#5a5a5a 6px,#4a4a4a);box-shadow:inset 0 1px 0 #9a9a9a"></div>
<div class="a" style="left:64px;top:771px;width:158px;height:13px;border-radius:3px 3px 0 0;background:linear-gradient(#f0f0f0,#c8c8c8 6px,#a8a8a8);border:1px solid #303030;border-bottom:none;box-sizing:border-box"></div>
<div class="a" style="left:226px;top:771px;width:159px;height:13px;border-radius:3px 3px 0 0;background:linear-gradient(#dcdcdc,#aaaaaa 6px,#8a8a8a);border:1px solid #303030;border-bottom:none;box-sizing:border-box"></div>
<div class="a" style="left:385px;top:771px;width:262px;height:13px;background:linear-gradient(#505050,#3a3a3a 6px,#222)"></div>
<div class="t" style="left:0px;top:780.84px;font-size:12px;color:#fff;letter-spacing:1.624px;">ления</div>
<div class="a" style="left:74px;top:776px;width:16px;height:10px;background:#2a6a9a;border:1px solid #1a3a5a;border-radius:2px;box-sizing:border-box"></div><div class="a" style="left:78px;top:779px;width:8px;height:6px;background:#fff"></div>
<div class="t" style="left:94px;top:780.84px;font-size:12px;color:#fff;letter-spacing:-0.109px;text-shadow:0 0 2px #000">3014953: MetaTrader</div>
<div class="a" style="left:236px;top:775px;width:16px;height:14px;border-radius:8px;background:radial-gradient(#f0d060,#a07010)"></div>
<div class="t" style="left:256px;top:780.84px;font-size:12px;color:#fff;letter-spacing:-0.004px;text-shadow:0 0 2px #000">10285: RVDTrader 4</div>
<div class="t" style="left:476.7px;top:778.84px;font-size:12px;color:#fff;letter-spacing:-3.371px;">EN</div>
<svg class="a" style="left:499px;top:775px" width="15" height="9"><path d="M2 8v-4h10v4M4 4l2-3h6" fill="none" stroke="#cfcfcf" stroke-width="1.3"/></svg>
<div class="a" style="left:548px;top:775px;width:7px;height:9px;background:#ddd"></div>
<div class="t" style="left:593px;top:780.84px;font-size:12px;color:#fff;letter-spacing:-0.385px;">11:50</div>
<div class="a" style="left:646px;top:771px;width:14px;height:13px;background:linear-gradient(#6a6a6a,#3a3a3a);border-left:1px solid #888;box-sizing:border-box"></div>
</body></html>
